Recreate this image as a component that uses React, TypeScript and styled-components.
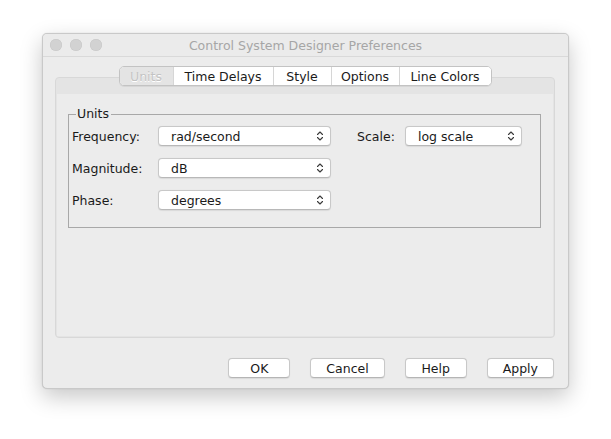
import React from "react";
import styled, { createGlobalStyle } from "styled-components";

const Global = createGlobalStyle`
  html, body { margin: 0; padding: 0; background: #ffffff; }
  body { font-family: "DejaVu Sans", "Liberation Sans", sans-serif; font-size: 12px; color: #1a1a1a; }
`;

const Page = styled.div`
  padding: 33px 0 0 42px;
  width: 611px;
  height: 439px;
  box-sizing: border-box;
`;

const Window = styled.div`
  width: 527px;
  height: 356px;
  box-sizing: border-box;
  background: #ececec;
  border: 1px solid #c9c9c9;
  border-radius: 5px;
  box-shadow: 0 8px 22px rgba(0, 0, 0, 0.22), 0 0 1px rgba(0, 0, 0, 0.2);
  display: flex;
  flex-direction: column;
  overflow: hidden;
`;

const TitleBar = styled.div`
  height: 22px;
  flex: none;
  display: grid;
  grid-template-columns: 80px 1fr 80px;
  align-items: center;
  background: #ebebeb;
  border-bottom: 1px solid #d9d9d9;
`;

const Lights = styled.div`
  display: flex;
  gap: 8px;
  padding-left: 7px;
`;

const Light = styled.span`
  width: 12px;
  height: 12px;
  border-radius: 50%;
  background: #d2d2d2;
  box-shadow: inset 0 0 0 0.5px #c6c6c6;
`;

const Title = styled.div`
  text-align: center;
  color: #a6a6a6;
  font-size: 12.5px;
  white-space: nowrap;
`;

const Body = styled.div`
  flex: 1;
  display: flex;
  flex-direction: column;
  padding: 9px 13px 10px 12px;
`;

const TabStrip = styled.div`
  display: flex;
  justify-content: center;
  margin-bottom: -9px;
  position: relative;
  z-index: 1;
`;

const Tabs = styled.div`
  display: flex;
  height: 20px;
  box-sizing: border-box;
  background: #ffffff;
  border: 1px solid #c3c3c3;
  border-radius: 5px;
  box-shadow: 0 1px 0 rgba(0, 0, 0, 0.06);
  overflow: hidden;
`;

const Tab = styled.div<{ $active?: boolean; $w: number }>`
  width: ${(p) => p.$w}px;
  display: flex;
  align-items: center;
  justify-content: center;
  box-sizing: border-box;
  font-size: 12.5px;
  color: ${(p) => (p.$active ? "#c3c3c3" : "#1a1a1a")};
  text-shadow: ${(p) => (p.$active ? "0 1px 0 #ffffff" : "none")};
  background: ${(p) => (p.$active ? "#e4e4e4" : "#ffffff")};
  & + & { border-left: 1px solid #d6d6d6; }
`;

const Pane = styled.div`
  height: 261px;
  box-sizing: border-box;
  border: 1px solid #d8d8d8;
  border-radius: 4px;
  background: #e4e4e4;
  padding: 16px 1px 1px 1px;
  display: flex;
`;

const PaneInner = styled.div`
  flex: 1;
  background: #ececec;
  padding: 13px 12px 0 11px;
`;

const Group = styled.fieldset`
  margin: 0;
  height: 121px;
  box-sizing: border-box;
  border: 1px solid #a8a8a8;
  padding: 5px 0 0 3px;
  min-width: 0;
`;

const Legend = styled.legend`
  font-size: 12.5px;
  padding: 0 2px 0 1px;
  margin-left: 4px;
  line-height: 14px;
  color: #1a1a1a;
`;

const Grid = styled.div`
  display: grid;
  grid-template-columns: 86px 173px 26px 48px 117px;
  grid-auto-rows: 20px;
  row-gap: 12px;
  align-items: center;
`;

const Label = styled.div<{ $col?: number }>`
  grid-column: ${(p) => p.$col ?? 1};
  font-size: 12.5px;
  white-space: nowrap;
`;

const Combo = styled.div<{ $col?: number }>`
  grid-column: ${(p) => p.$col ?? 2};
  height: 20px;
  box-sizing: border-box;
  background: #ffffff;
  border: 1px solid #c8c8c8;
  border-bottom-color: #b8b8b8;
  border-radius: 4px;
  box-shadow: 0 0.5px 1px rgba(0, 0, 0, 0.08);
  display: flex;
  align-items: center;
  justify-content: space-between;
  padding: 0 6px 0 12px;
  font-size: 12.5px;
`;

const Footer = styled.div`
  margin-top: auto;
  display: flex;
  justify-content: flex-end;
  gap: 20px;
  padding-right: 1px;
`;

const Button = styled.div`
  min-width: 62px;
  height: 20px;
  box-sizing: border-box;
  padding: 0 15px;
  background: #ffffff;
  border: 1px solid #c8c8c8;
  border-bottom-color: #b5b5b5;
  border-radius: 4px;
  box-shadow: 0 0.5px 1px rgba(0, 0, 0, 0.08);
  display: flex;
  align-items: center;
  justify-content: center;
  font-size: 12.5px;
`;

const Chevrons = () => (
  <svg width="8" height="12" viewBox="0 0 8 12" fill="none">
    <path d="M1.5 4.5 L4 2 L6.5 4.5" stroke="#3a3a3a" strokeWidth="1.1" strokeLinecap="round" strokeLinejoin="round" />
    <path d="M1.5 7.5 L4 10 L6.5 7.5" stroke="#3a3a3a" strokeWidth="1.1" strokeLinecap="round" strokeLinejoin="round" />
  </svg>
);

const tabs: { label: string; w: number; active?: boolean }[] = [
  { label: "Units", w: 53, active: true },
  { label: "Time Delays", w: 100 },
  { label: "Style", w: 58 },
  { label: "Options", w: 68 },
  { label: "Line Colors", w: 92 },
];

export default function App() {
  return (
    <>
      <Global />
      <Page>
        <Window>
          <TitleBar>
            <Lights>
              <Light />
              <Light />
              <Light />
            </Lights>
            <Title>Control System Designer Preferences</Title>
            <span />
          </TitleBar>
          <Body>
            <TabStrip>
              <Tabs>
                {tabs.map((t) => (
                  <Tab key={t.label} $w={t.w} $active={t.active}>
                    {t.label}
                  </Tab>
                ))}
              </Tabs>
            </TabStrip>
            <Pane>
              <PaneInner>
                <Group>
                  <Legend>Units</Legend>
                  <Grid>
                    <Label>Frequency:</Label>
                    <Combo>
                      rad/second
                      <Chevrons />
                    </Combo>
                    <Label $col={4}>Scale:</Label>
                    <Combo $col={5}>
                      log scale
                      <Chevrons />
                    </Combo>
                    <Label>Magnitude:</Label>
                    <Combo>
                      dB
                      <Chevrons />
                    </Combo>
                    <Label>Phase:</Label>
                    <Combo>
                      degrees
                      <Chevrons />
                    </Combo>
                  </Grid>
                </Group>
              </PaneInner>
            </Pane>
            <Footer>
              <Button>OK</Button>
              <Button>Cancel</Button>
              <Button>Help</Button>
              <Button>Apply</Button>
            </Footer>
          </Body>
        </Window>
      </Page>
    </>
  );
}
